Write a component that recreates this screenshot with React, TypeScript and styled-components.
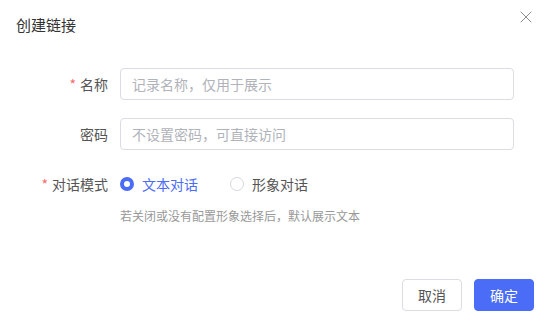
import React, { useState } from "react";
import styled, { createGlobalStyle } from "styled-components";
import { X } from "lucide-react";

const GlobalStyle = createGlobalStyle`
  html, body {
    margin: 0;
    padding: 0;
    background: #fff;
  }
  * {
    box-sizing: border-box;
  }
`;

type Mode = "text" | "avatar";

const App = () => {
  // 对话模式
  const [mode, setMode] = useState<Mode>("text");

  return (
    <>
      <GlobalStyle />
      <Dialog>
        <Header>
          <Title>创建链接</Title>
          <CloseButton aria-label="关闭">
            <X size={20} strokeWidth={1.2} />
          </CloseButton>
        </Header>
        <Body>
          <FormItem>
            <Label $required>名称</Label>
            <Input placeholder="记录名称，仅用于展示" />
          </FormItem>
          <FormItem>
            <Label>密码</Label>
            <Input placeholder="不设置密码，可直接访问" />
          </FormItem>
          <FormItem>
            <Label $required>对话模式</Label>
            <Control>
              <RadioGroup>
                <RadioItem $checked={mode === "text"} onClick={() => setMode("text")}>
                  <RadioDot $checked={mode === "text"} />
                  文本对话
                </RadioItem>
                <RadioItem $checked={mode === "avatar"} onClick={() => setMode("avatar")}>
                  <RadioDot $checked={mode === "avatar"} />
                  形象对话
                </RadioItem>
              </RadioGroup>
              <Help>若关闭或没有配置形象选择后，默认展示文本</Help>
            </Control>
          </FormItem>
        </Body>
        <Footer>
          <Button>取消</Button>
          <Button $primary>确定</Button>
        </Footer>
      </Dialog>
    </>
  );
};

export default App;

const Dialog = styled.div`
  width: 548px;
  height: 325px;
  display: flex;
  flex-direction: column;
  background: #fff;
  font-family: "Noto Sans CJK SC", "Noto Sans", sans-serif;
  color: #333;
`;

const Header = styled.div`
  display: flex;
  justify-content: space-between;
  align-items: flex-start;
  padding: 14px 12px 0 16px;
  height: 50px;
`;

const Title = styled.div`
  font-size: 15px;
  line-height: 22px;
  color: #333;
`;

const CloseButton = styled.button`
  display: flex;
  align-items: center;
  justify-content: center;
  width: 20px;
  height: 20px;
  margin-top: -7px;
  padding: 0;
  border: none;
  background: none;
  color: #8c8c8c;
  cursor: pointer;
`;

const Body = styled.div`
  flex: 1;
  padding: 18px 34px 0 16px;
`;

const FormItem = styled.div`
  display: flex;
  align-items: flex-start;
  margin-bottom: 18px;
`;

const Label = styled.label<{ $required?: boolean }>`
  width: 92px;
  margin-right: 12px;
  flex-shrink: 0;
  text-align: right;
  font-size: 14px;
  line-height: 32px;
  color: #555;

  &::before {
    content: "${(p) => (p.$required ? "*" : "")}";
    color: #f56c6c;
    margin-right: 4px;
  }
`;

const Input = styled.input`
  flex: 1;
  height: 32px;
  padding: 0 11px;
  border: 1px solid #dcdde3;
  border-radius: 4px;
  font-family: inherit;
  font-size: 14px;
  color: #333;
  outline: none;

  &::placeholder {
    color: #b0b3ba;
  }
`;

const Control = styled.div`
  flex: 1;
  display: flex;
  flex-direction: column;
`;

const RadioGroup = styled.div`
  display: flex;
  align-items: center;
  height: 32px;
  gap: 32px;
`;

const RadioItem = styled.div<{ $checked?: boolean }>`
  display: flex;
  align-items: center;
  gap: 8px;
  font-size: 14px;
  color: ${(p) => (p.$checked ? "#4a6cf7" : "#555")};
  cursor: pointer;
`;

const RadioDot = styled.span<{ $checked?: boolean }>`
  width: 14px;
  height: 14px;
  border-radius: 50%;
  border: ${(p) => (p.$checked ? "4px solid #4a6cf7" : "1px solid #d6d8de")};
  background: #fff;
`;

const Help = styled.div`
  margin-top: 6px;
  font-size: 12px;
  line-height: 20px;
  color: #999;
`;

const Footer = styled.div`
  display: flex;
  justify-content: flex-end;
  gap: 12px;
  padding: 0 14px 14px 0;
`;

const Button = styled.button<{ $primary?: boolean }>`
  width: 60px;
  height: 32px;
  border-radius: 4px;
  font-family: inherit;
  font-size: 14px;
  cursor: pointer;
  border: 1px solid ${(p) => (p.$primary ? "#4a6cf7" : "#dcdde3")};
  background: ${(p) => (p.$primary ? "#4a6cf7" : "#fff")};
  color: ${(p) => (p.$primary ? "#fff" : "#555")};
`;
